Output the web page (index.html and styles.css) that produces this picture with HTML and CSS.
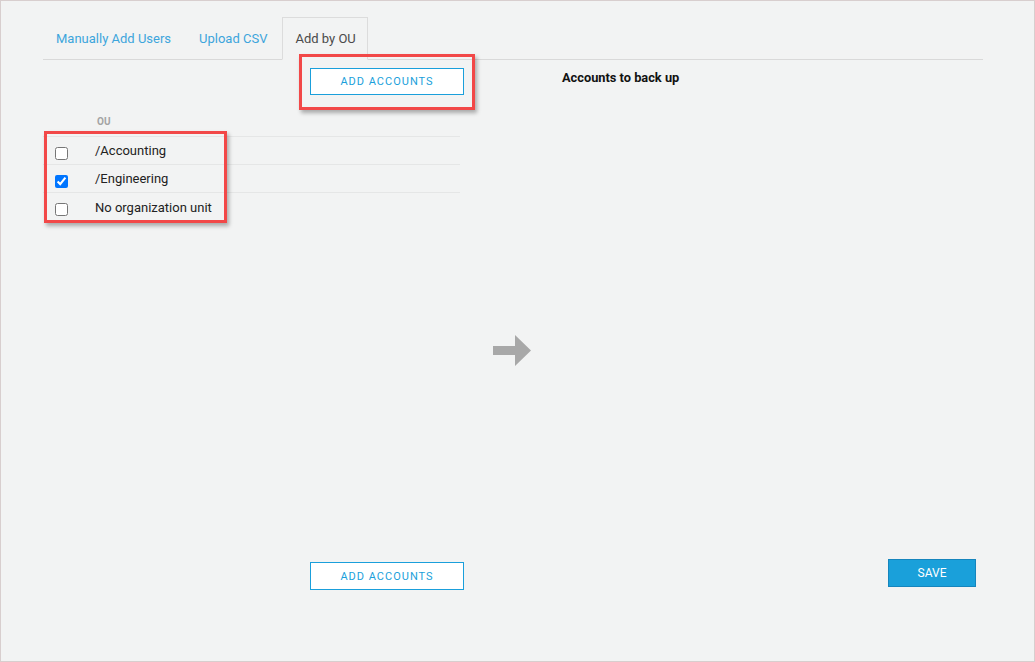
FILE: index.html
```html
<!DOCTYPE html>
<html lang="en">
<head>
<meta charset="utf-8">
<title>Add by OU</title>
<link rel="stylesheet" href="styles.css">
</head>
<body>
<div class="frame">
  <nav class="tabs">
    <a class="tab">Manually Add Users</a>
    <a class="tab">Upload CSV</a>
    <a class="tab active">Add by OU</a>
  </nav>
  <div class="content">
    <section class="left">
      <button class="btn-outline btn-top">ADD ACCOUNTS</button>
      <div class="ou-table">
        <div class="ou-head">OU</div>
        <label class="ou-row"><input type="checkbox"><span>/Accounting</span></label>
        <label class="ou-row"><input type="checkbox" checked><span>/Engineering</span></label>
        <label class="ou-row"><input type="checkbox"><span>No organization unit</span></label>
      </div>
      <button class="btn-outline btn-bottom">ADD ACCOUNTS</button>
    </section>
    <div class="mid">
      <svg class="arrow" width="38" height="31" viewBox="0 0 38 31"><path d="M0 11H22V0L38 15.5L22 31V20H0Z" fill="#a8a8a8"/></svg>
    </div>
    <section class="right">
      <h3 class="right-title">Accounts to back up</h3>
      <button class="btn-save">SAVE</button>
    </section>
  </div>
  <div class="mark mark-btn"></div>
  <div class="mark mark-rows"></div>
</div>
</body>
</html>
```
FILE: styles.css
```css
* { box-sizing: border-box; }
html, body { margin: 0; padding: 0; }
body {
  font-family: Roboto, "Liberation Sans", sans-serif;
  background: #f2f3f3;
}
.frame {
  position: relative;
  width: 1035px;
  height: 662px;
  border: 1px solid #d8cece;
  background: #f2f3f3;
}
.tabs {
  display: flex;
  margin: 16px 51px 0 42px;
  height: 43px;
  border-bottom: 1px solid #d9d9d9;
  gap: 2px;
}
.tab {
  display: flex;
  align-items: center;
  padding: 0 13px;
  height: 42px;
  font-size: 13px;
  color: #3da5dc;
  cursor: pointer;
}
.tab.active {
  color: #4a4a4a;
  border: 1px solid #dcdcdc;
  border-bottom: 1px solid #f2f3f3;
  height: 43px;
  padding: 0 11px 0 12px;
}
.content {
  display: flex;
  margin: 0 51px 0 42px;
  height: 601px;
}
.left {
  width: 421px;
  display: flex;
  flex-direction: column;
}
.btn-outline {
  width: 154px;
  height: 28px;
  background: #fff;
  border: 1px solid #1a9fdb;
  color: #1a9fdb;
  font-family: inherit;
  font-size: 11px;
  letter-spacing: 1px;
  padding: 0;
  align-self: flex-end;
}
.btn-top { margin-top: 8px; height: 27px; }
.btn-bottom { margin-top: auto; margin-bottom: 71px; }
.ou-table {
  margin-top: 15px;
  width: 417px;
}
.ou-head {
  height: 27px;
  padding-left: 54px;
  font-size: 10px;
  font-weight: 700;
  color: #a3a3a3;
  line-height: 24px;
  border-bottom: 1px solid #e5e6e6;
}
.ou-row {
  display: flex;
  align-items: center;
  height: 28px;
  font-size: 13px;
  color: #222;
  border-bottom: 1px solid #e5e6e6;
}
.ou-row:last-child { border-bottom: none; }
.ou-row input {
  width: 13px;
  height: 13px;
  margin: 5px 27px 0 12px;
}
.mid {
  width: 97px;
  display: flex;
  align-items: center;
  justify-content: center;
  padding-bottom: 20px;
  padding-right: 2px;
}
.right {
  flex: 1;
  display: flex;
  flex-direction: column;
  padding-left: 1px;
}
.right-title {
  margin: 10px 0 0;
  font-size: 12.8px;
  font-weight: 700;
  color: #111;
  line-height: 16px;
}
.btn-save {
  margin-top: auto;
  margin-bottom: 74px;
  margin-right: 7px;
  align-self: flex-end;
  width: 88px;
  height: 28px;
  background: #1aa0da;
  border: 1px solid #1685bd;
  color: #fff;
  font-family: inherit;
  font-size: 12px;
  padding: 0;
}
.mark {
  position: absolute;
  border: 3px solid #f24848;
  box-shadow: 2px 3px 4px rgba(0,0,0,0.3);
}
.mark-btn { left: 298px; top: 53px; width: 176px; height: 56px; }
.mark-rows { left: 43px; top: 130px; width: 183px; height: 92px; }
```
